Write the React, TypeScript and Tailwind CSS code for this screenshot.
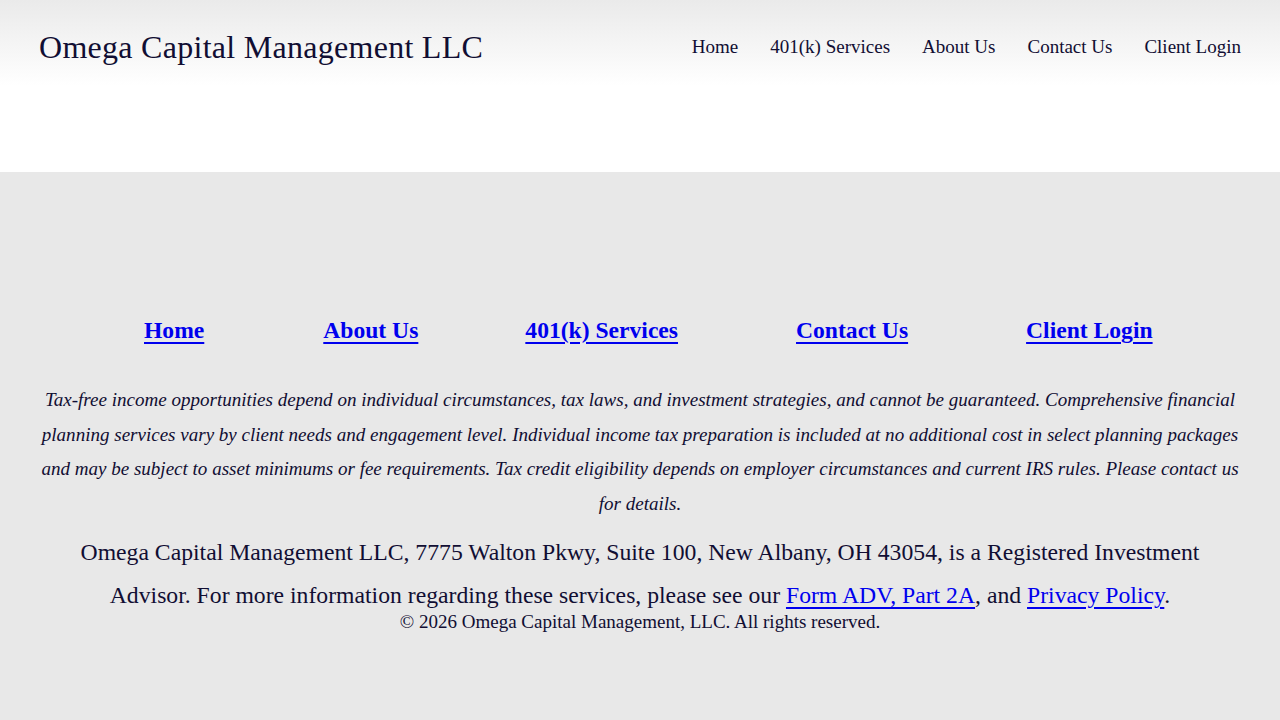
import React from "react";

const serif = { fontFamily: '"Liberation Serif", "Times New Roman", serif' };

export default function App() {
  const navLinks = ["Home", "401(k) Services", "About Us", "Contact Us", "Client Login"];
  return (
    <div style={serif} className="min-h-[720px] bg-[#e8e8e8] text-[#110e33]">
      <header className="h-[172px] bg-gradient-to-b from-[#eaeaea] via-white to-white">
        <div className="flex items-center justify-between px-[39px] pt-[27px]">
          <h1 className="text-[32px] leading-[40px] tracking-[0.28px] text-[#110e33]">
            Omega Capital Management LLC
          </h1>
          <nav className="flex gap-[32px] text-[19px] leading-[40px]">
            {navLinks.map((l) => (
              <a key={l} href="#" className="text-[#110e33]">
                {l}
              </a>
            ))}
          </nav>
        </div>
      </header>
      <footer className="pt-[142px] pb-[80px]">
        <div className="flex pl-[144px] text-[23.6px] leading-[32px] font-bold text-[#0000ee]">
          <a href="#" className="underline underline-offset-[4px]">Home</a>
          <a href="#" className="ml-[119px] underline underline-offset-[4px]">About Us</a>
          <a href="#" className="ml-[107px] underline underline-offset-[4px]">401(k) Services</a>
          <a href="#" className="ml-[118px] underline underline-offset-[4px]">Contact Us</a>
          <a href="#" className="ml-[118px] underline underline-offset-[4px]">Client Login</a>
        </div>
        <p className="mx-[40px] mt-[37px] text-center text-[19.05px] italic leading-[34.5px]">
          Tax-free income opportunities depend on individual circumstances, tax laws, and investment strategies, and cannot be guaranteed. Comprehensive financial planning services vary by client needs and engagement level. Individual income tax preparation is included at no additional cost in select planning packages and may be subject to asset minimums or fee requirements. Tax credit eligibility depends on employer circumstances and current IRS rules. Please contact us for details.
        </p>
        <p className="mx-[40px] mt-[10px] text-center text-[23.7px] leading-[43px]">
          Omega Capital Management LLC, 7775 Walton Pkwy, Suite 100, New Albany, OH 43054, is a Registered Investment Advisor. For more information regarding these services, please see our{" "}
          <a href="#" className="text-[#0000ee] underline underline-offset-[4px]">Form ADV, Part 2A</a>, and{" "}
          <a href="#" className="text-[#0000ee] underline underline-offset-[4px]">Privacy Policy</a>.
        </p>
        <p className="-mt-[5px] text-center text-[19px] leading-[20px]">
          © 2026 Omega Capital Management, LLC. All rights reserved.
        </p>
      </footer>
    </div>
  );
}
